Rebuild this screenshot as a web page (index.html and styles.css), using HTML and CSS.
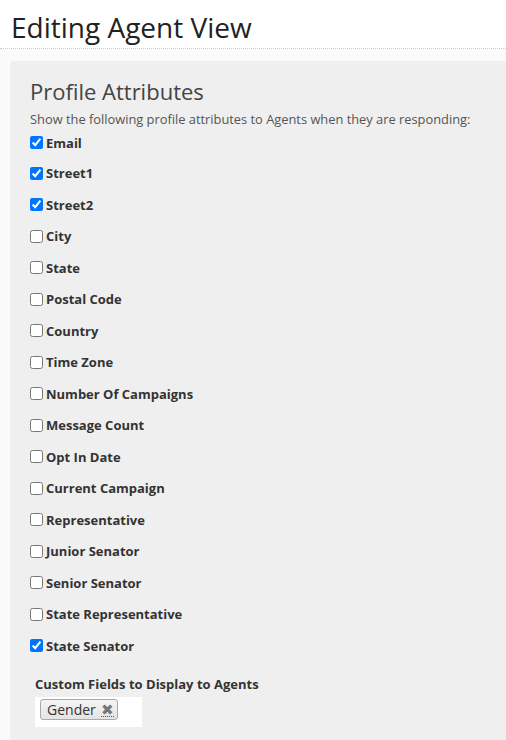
FILE: index.html
```html
<!DOCTYPE html>
<html>
<head>
<meta charset="utf-8">
<link rel="stylesheet" href="styles.css">
</head>
<body>
<header class="page-header">
  <h1>Editing Agent View</h1>
</header>
<main class="content">
  <section class="panel">
    <h2>Profile Attributes</h2>
    <p class="desc">Show the following profile attributes to Agents when they are responding:</p>
    <ul class="attrs">
      <li><label><input type="checkbox" checked>Email</label></li>
      <li><label><input type="checkbox" checked>Street1</label></li>
      <li><label><input type="checkbox" checked>Street2</label></li>
      <li><label><input type="checkbox">City</label></li>
      <li><label><input type="checkbox">State</label></li>
      <li><label><input type="checkbox">Postal Code</label></li>
      <li><label><input type="checkbox">Country</label></li>
      <li><label><input type="checkbox">Time Zone</label></li>
      <li><label><input type="checkbox">Number Of Campaigns</label></li>
      <li><label><input type="checkbox">Message Count</label></li>
      <li><label><input type="checkbox">Opt In Date</label></li>
      <li><label><input type="checkbox">Current Campaign</label></li>
      <li><label><input type="checkbox">Representative</label></li>
      <li><label><input type="checkbox">Junior Senator</label></li>
      <li><label><input type="checkbox">Senior Senator</label></li>
      <li><label><input type="checkbox">State Representative</label></li>
      <li><label><input type="checkbox" checked>State Senator</label></li>
    </ul>
    <div class="custom">
      <div class="custom-label">Custom Fields to Display to Agents</div>
      <div class="tag-box">
        <span class="tag">Gender <abbr class="tag-x" title="Remove">✖</abbr></span>
      </div>
    </div>
  </section>
</main>
</body>
</html>
```
FILE: styles.css
```css
html, body {
  margin: 0;
  padding: 0;
}
body {
  font-family: "Open Sans", sans-serif;
  background: #fafafa;
  color: #333;
  overflow: hidden;
  height: 740px;
}
.page-header {
  background: #fff;
  height: 49px;
  border-bottom: 1px dotted #ccc;
  padding: 0 0 0 11px;
  box-sizing: border-box;
}
.page-header h1 {
  margin: 0;
  padding-top: 8px;
  font-size: 28px;
  font-weight: 400;
  line-height: 38px;
  color: #222;
}
.content {
  padding: 12px 0 0 10px;
}
.panel {
  background: #efefef;
  border-radius: 4px 0 0 0;
  padding: 12px 0 30px 20px;
  min-height: 700px;
}
.panel h2 {
  margin: 0;
  font-size: 22px;
  font-weight: 400;
  line-height: 37px;
  color: #444;
}
.desc {
  margin: 0;
  font-size: 12.85px;
  line-height: 18px;
  color: #555;
}
.attrs {
  list-style: none;
  margin: 0;
  padding: 0;
}
.attrs li {
  height: 31.5px;
  display: flex;
  align-items: center;
}
.attrs li:first-child {
  height: 29.5px;
}
.attrs label {
  display: flex;
  align-items: center;
  font-size: 13px;
  font-weight: 700;
  color: #333;
}
.attrs input {
  margin: 0 3px 0 0;
  width: 13px;
  height: 13px;
}
.custom {
  margin-top: 13px;
  padding-left: 5px;
}
.custom-label {
  font-size: 13px;
  font-weight: 700;
  color: #333;
  line-height: 18px;
}
.tag-box {
  margin-top: 4px;
  background: #fff;
  width: 107px;
  height: 30px;
  box-sizing: border-box;
  padding: 1px 5px;
}
.tag {
  display: inline-flex;
  align-items: center;
  height: 21px;
  box-sizing: border-box;
  padding: 0 3px 0 6px;
  border: 1px solid #aaa;
  border-radius: 3px;
  background: linear-gradient(#f4f4f4, #e4e4e4);
  font-size: 14px;
  color: #333;
}
.tag-x {
  margin-left: 5px;
  font-size: 15px;
  line-height: 14px;
  color: #777;
  text-decoration: none;
  border-bottom: 1px dotted #555;
}
```
